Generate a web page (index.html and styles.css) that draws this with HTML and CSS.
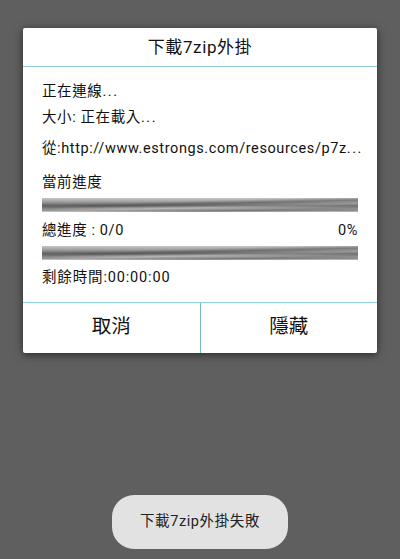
FILE: index.html
```html
<!DOCTYPE html>
<html lang="zh-Hant">
<head>
<meta charset="utf-8">
<title>下載7zip外掛</title>
<link rel="stylesheet" href="styles.css">
</head>
<body>
<main class="screen">
  <section class="dialog">
    <h1 class="title">下載7zip外掛</h1>
    <div class="content">
      <p class="line status">正在連線<span class="dots">...</span></p>
      <p class="line size">大小: 正在載入<span class="dots">...</span></p>
      <p class="line url">從:http://www.estrongs.com/resources/p7z<span class="dots">...</span></p>
      <p class="line current">當前進度</p>
      <div class="bar"></div>
      <div class="line total"><span>總進度 : 0/0</span><span>0%</span></div>
      <div class="bar"></div>
      <p class="line remain">剩餘時間:00:00:00</p>
    </div>
    <div class="actions">
      <button class="action">取消</button>
      <button class="action">隱藏</button>
    </div>
  </section>
  <div class="toast">下載7zip外掛失敗</div>
</main>
</body>
</html>
```
FILE: styles.css
```css
* { box-sizing: border-box; }
html, body { margin: 0; padding: 0; }
body {
  width: 400px;
  height: 559px;
  overflow: hidden;
  background: #5f5f5f;
  font-family: Roboto, "Noto Sans CJK TC", sans-serif;
  color: #111;
}
.screen {
  position: relative;
  height: 559px;
  padding: 28px 23px 0;
}
.dialog {
  background: #fff;
  height: 325px;
  border-radius: 2px;
  display: flex;
  flex-direction: column;
  box-shadow: 0 2px 8px rgba(0, 0, 0, .55);
}
.title {
  margin: 0;
  height: 39px;
  flex: none;
  border-bottom: 1px solid #8fc9dc;
  font-size: 17px;
  font-weight: 400;
  letter-spacing: .6px;
  line-height: 38px;
  text-align: center;
}
.content {
  flex: 1;
  padding: 15px 19px 0;
}
.line {
  margin: 0;
  font-size: 14.5px;
  letter-spacing: .6px;
  line-height: 20px;
  white-space: nowrap;
}
.dots { letter-spacing: 1.6px; }
.size { margin-top: 6px; }
.url { margin-top: 11px; }
.current { margin-top: 14px; }
.total {
  display: flex;
  justify-content: space-between;
  margin: 9px 0 5px;
}
.remain {
  margin-top: 8px;
  letter-spacing: .85px;
}
.bar {
  height: 14px;
  margin-top: 5px;
  background:
    linear-gradient(178.6deg, rgba(255,255,255,0) 30%, rgba(80,80,80,.55) 45%, rgba(255,255,255,.2) 62%, rgba(80,80,80,.35) 80%, rgba(255,255,255,0) 95%),
    linear-gradient(to bottom, #c6c6c6 0, #a2a2a2 25%, #636363 55%, #a8a8a8 72%, #8a8a8a 92%, #d2d2d2 100%);
}
.total + .bar { margin-top: 0; }
.actions {
  flex: none;
  height: 51px;
  display: flex;
  border-top: 1px solid #8fd0de;
}
.action {
  flex: 1;
  border: 0;
  background: none;
  padding: 0 0 7px;
  font-family: inherit;
  font-size: 19.5px;
  color: #111;
}
.action + .action { border-left: 1px solid #6fbccb; }
.toast {
  position: absolute;
  left: 112px;
  top: 495px;
  width: 176px;
  height: 54px;
  border-radius: 22px;
  background: #e2e2e2;
  color: #222;
  font-size: 14.5px;
  letter-spacing: .6px;
  line-height: 54px;
  text-align: center;
}
```
